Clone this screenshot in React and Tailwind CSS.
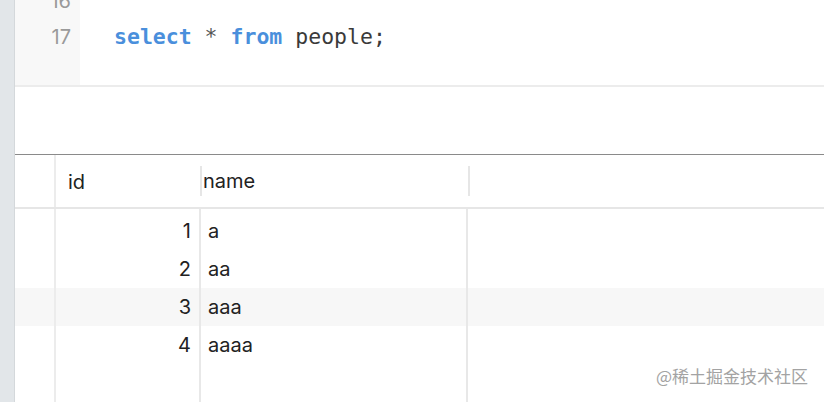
import React from 'react';

const ROWS = [
    { id: 1, name: 'a' },
    { id: 2, name: 'aa' },
    { id: 3, name: 'aaa' },
    { id: 4, name: 'aaaa' },
];

const mono = { fontFamily: '"DejaVu Sans Mono", "Liberation Mono", monospace' };

function GridRow({ striped, height, left, children }) {
    return (
        <div className={`flex shrink-0 ${striped ? 'bg-[#f7f7f7]' : ''}`} style={{ height }}>
            <div className="w-[41px] shrink-0 border-r-2 border-[#ececec]">{left}</div>
            {children}
        </div>
    );
}

export default function App() {
    return (
        <div className="relative w-[824px] h-[402px] flex overflow-hidden bg-white text-[#222] font-['Inter','Roboto',sans-serif]">
            {/* left strip */}
            <div className="w-[15px] shrink-0 bg-[#e2e6e9] border-r border-[#d4d8db]" />

            <div className="flex-1 flex flex-col">
                {/* editor */}
                <div className="h-[87px] shrink-0 flex border-b-2 border-[#ececec] overflow-hidden">
                    <div className="w-[65px] shrink-0 bg-[#f8f8f8] flex flex-col items-end pr-[9px] mt-[-17px] text-[#9a9a9a] text-[20px]">
                        <div className="h-[36px] leading-[36px]">16</div>
                        <div className="h-[36px] leading-[36px]">17</div>
                    </div>
                    <div className="flex flex-col pl-[34px] mt-[-17px] text-[21.5px]" style={mono}>
                        <div className="h-[36px]" />
                        <div className="h-[36px] leading-[36px] whitespace-pre">
                            <span className="text-[#4a8fdc] font-bold">select</span>
                            <span className="text-[#555]"> * </span>
                            <span className="text-[#4a8fdc] font-bold">from</span>
                            <span className="text-[#3a3a3a]"> people;</span>
                        </div>
                    </div>
                </div>

                {/* blank output area */}
                <div className="h-[68px] shrink-0 border-b border-[#8a8a8a]" />

                {/* header */}
                <div className="h-[54px] shrink-0 flex border-b-2 border-[#e6e6e6] text-[20px]">
                    <div className="w-[41px] shrink-0 border-r-2 border-[#ececec]" />
                    <div className="w-[144px] flex items-center pl-[12px] pt-[1px]">id</div>
                    <div className="flex items-center">
                        <div className="w-[268px] h-[30px] flex items-center border-l-2 border-[#e6e6e6] pl-[1px]">name</div>
                        <div className="h-[30px] border-l-2 border-[#e6e6e6]" />
                    </div>
                </div>

                {/* data */}
                <div className="flex-1 flex flex-col text-[20px]">
                    <GridRow height={3} left={null}>
                        <div className="w-[143px]" />
                        <div className="w-[269px] border-l-2 border-r-2 border-[#e8e8e8]" />
                    </GridRow>
                    {ROWS.map((r, i) => (
                        <GridRow key={r.id} height={38} striped={i === 2}>
                            <div className="w-[143px] flex items-center justify-end pr-[8px]">{r.id}</div>
                            <div className="w-[269px] flex items-center pl-[7px] border-l-2 border-r-2 border-[#e8e8e8]">{r.name}</div>
                        </GridRow>
                    ))}
                    <div className="flex-1 flex">
                        <div className="w-[41px] shrink-0 border-r-2 border-[#ececec]" />
                        <div className="w-[143px]" />
                        <div className="w-[269px] border-l-2 border-r-2 border-[#e8e8e8]" />
                    </div>
                </div>
            </div>

            {/* watermark */}
            <div className="absolute right-[16px] bottom-[14px] text-[17px] text-[#a3a3a3] font-['Noto_Sans_CJK_SC',sans-serif]">
                @稀土掘金技术社区
            </div>
        </div>
    );
}
